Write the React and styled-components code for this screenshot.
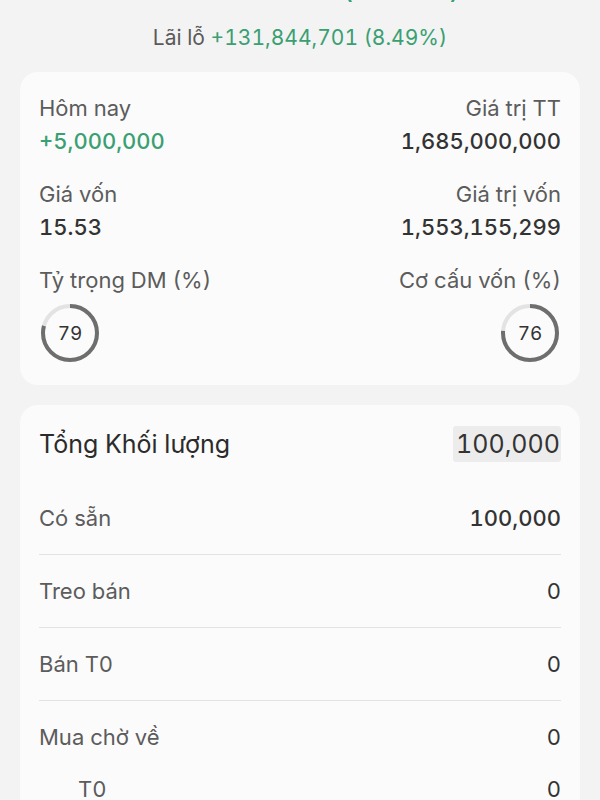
import React from "react";
import styled, {createGlobalStyle} from "styled-components";

const GlobalStyle = createGlobalStyle`
    body {
        margin: 0;
        background: #f3f3f3;
        font-family: Inter, "Noto Sans", sans-serif;
        font-variant-numeric: tabular-nums;
    }
`;

// vòng tròn phần trăm
function Ring({value}) {
    const r = 27;
    const c = 2 * Math.PI * r;
    return (
        <RingBox>
            <svg width="62" height="62" viewBox="0 0 62 62">
                <circle cx="31" cy="31" r={r} fill="none" stroke="#e3e3e3" strokeWidth="4"/>
                <circle
                    cx="31"
                    cy="31"
                    r={r}
                    fill="none"
                    stroke="#6e6e6e"
                    strokeWidth="4"
                    strokeDasharray={`${(c * value) / 100} ${c}`}
                    transform="rotate(-90 31 31)"
                />
            </svg>
            <RingText>{value}</RingText>
        </RingBox>
    );
}

const rows = [
    {label: "Có sẵn", value: "100,000", strong: true},
    {label: "Treo bán", value: "0"},
    {label: "Bán T0", value: "0"},
];

function App() {
    return (
        <Page>
            <GlobalStyle/>
            <Header>
                <BigValue>1685000000 (8.49%)</BigValue>
                <Profit>
                    Lãi lỗ <Green>+131,844,701 (8.49%)</Green>
                </Profit>
            </Header>

            <Card>
                <StatGrid>
                    <Stat>
                        <Label>Hôm nay</Label>
                        <Value $green>+5,000,000</Value>
                    </Stat>
                    <Stat $right>
                        <Label>Giá trị TT</Label>
                        <Value>1,685,000,000</Value>
                    </Stat>
                    <Stat>
                        <Label>Giá vốn</Label>
                        <Value>15.53</Value>
                    </Stat>
                    <Stat $right>
                        <Label>Giá trị vốn</Label>
                        <Value>1,553,155,299</Value>
                    </Stat>
                    <Stat>
                        <Label>Tỷ trọng DM (%)</Label>
                        <Ring value={79}/>
                    </Stat>
                    <Stat $right>
                        <Label>Cơ cấu vốn (%)</Label>
                        <Ring value={76}/>
                    </Stat>
                </StatGrid>
            </Card>

            <Card>
                <TotalRow>
                    <TotalLabel>Tổng Khối lượng</TotalLabel>
                    <TotalValue>100,000</TotalValue>
                </TotalRow>
                {rows.map((r) => (
                    <Row key={r.label}>
                        <RowLabel>{r.label}</RowLabel>
                        <RowValue $strong={r.strong}>{r.value}</RowValue>
                    </Row>
                ))}
                <Row $plain>
                    <RowLabel>Mua chờ về</RowLabel>
                    <RowValue>0</RowValue>
                </Row>
                <SubRow>
                    <RowLabel>T0</RowLabel>
                    <RowValue>0</RowValue>
                </SubRow>
            </Card>
        </Page>
    );
}

export default App;

// style
const Page = styled.div`
    height: 800px;
    overflow: hidden;
    padding: 0 20px;
    box-sizing: border-box;
`;
const Header = styled.div`
    display: flex;
    flex-direction: column;
    align-items: center;
    margin-top: -30px;
`;
const BigValue = styled.div`
    font-size: 30px;
    line-height: 36px;
    color: #3a9f72;
`;
const Profit = styled.div`
    margin-top: 18px;
    font-size: 21px;
    line-height: 28px;
    color: #5a5a5a;
`;
const Green = styled.span`
    color: #3a9f72;
`;
const Card = styled.div`
    margin-top: 20px;
    background: #fbfbfb;
    border-radius: 18px;
    padding: 21px 19px 21px;
`;
const StatGrid = styled.div`
    display: grid;
    grid-template-columns: 1fr 1fr;
    row-gap: 23px;
`;
const Stat = styled.div`
    display: flex;
    flex-direction: column;
    align-items: ${(p) => (p.$right ? "flex-end" : "flex-start")};
    gap: 3px;
`;
const Label = styled.div`
    font-size: 22px;
    line-height: 30px;
    color: #5c5c5c;
`;
const Value = styled.div`
    font-size: 22px;
    line-height: 30px;
    font-weight: 500;
    color: ${(p) => (p.$green ? "#3a9f72" : "#333")};
`;
const RingBox = styled.div`
    position: relative;
    width: 62px;
    height: 62px;
    margin-top: 4px;
    display: flex;
    align-items: center;
    justify-content: center;

    svg {
        position: absolute;
        inset: 0;
    }
`;
const RingText = styled.span`
    font-size: 19px;
    color: #333;
`;
const TotalRow = styled.div`
    display: flex;
    justify-content: space-between;
    align-items: center;
    height: 36px;
    margin-bottom: 20px;
`;
const TotalLabel = styled.div`
    font-size: 25px;
    color: #2b2b2b;
`;
const TotalValue = styled.div`
    font-size: 25px;
    line-height: 36px;
    padding: 0 1px 0 3px;
    border-radius: 3px;
    background: #ececec;
    color: #333;
`;
const Row = styled.div`
    display: flex;
    justify-content: space-between;
    align-items: center;
    height: 72px;
    border-bottom: ${(p) => (p.$plain ? "none" : "1px solid #e3e3e3")};
`;
const SubRow = styled(Row)`
    height: 32px;
    padding-left: 39px;
    border-bottom: none;
`;
const RowLabel = styled.div`
    font-size: 22px;
    color: #5c5c5c;
`;
const RowValue = styled.div`
    font-size: 22px;
    color: #333;
    font-weight: ${(p) => (p.$strong ? 500 : 400)};
`;
